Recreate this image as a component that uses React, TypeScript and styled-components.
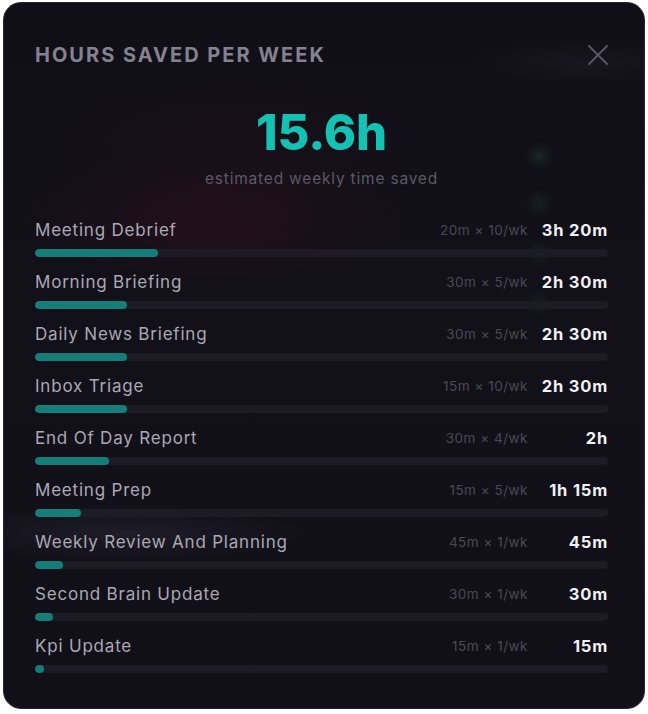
import React from "react";
import styled, { createGlobalStyle } from "styled-components";

const Global = createGlobalStyle`
  html, body { margin: 0; padding: 0; background: #ffffff; }
  body { font-family: "Inter", "Noto Sans", sans-serif; }
`;

const Page = styled.div`
  width: 648px;
  height: 714px;
  padding: 2px 3px 5px 3px;
  box-sizing: border-box;
`;

const Panel = styled.div`
  position: relative;
  width: 642px;
  height: 707px;
  box-sizing: border-box;
  border-radius: 18px;
  border: 1px solid #262530;
  overflow: hidden;
  padding: 39px 36px 0 31px;
  display: flex;
  flex-direction: column;
  background:
    radial-gradient(ellipse 260px 90px at 210px 215px, rgba(48, 14, 30, 0.55), transparent 75%),
    radial-gradient(ellipse 260px 90px at 230px 140px, rgba(34, 16, 24, 0.45), transparent 75%),
    radial-gradient(ellipse 260px 40px at 120px 530px, rgba(60, 60, 75, 0.3), transparent 70%),
    radial-gradient(circle 14px at 535px 153px, rgba(40, 90, 60, 0.3), transparent 100%),
    radial-gradient(circle 14px at 535px 200px, rgba(40, 90, 60, 0.22), transparent 100%),
    radial-gradient(circle 14px at 535px 250px, rgba(40, 90, 60, 0.2), transparent 100%),
    radial-gradient(circle 14px at 535px 300px, rgba(40, 90, 60, 0.2), transparent 100%),
    radial-gradient(ellipse 140px 30px at 580px 60px, rgba(40, 40, 55, 0.3), transparent 80%),
    linear-gradient(180deg, #100f17 0%, #121019 40%, #111019 100%);
`;

const Header = styled.div`
  display: flex;
  justify-content: space-between;
  align-items: center;
  height: 26px;
`;

const Title = styled.h2`
  margin: 0;
  font-size: 20px;
  font-weight: 700;
  letter-spacing: 2px;
  color: #84828e;
  line-height: 26px;
`;

const CloseButton = styled.button`
  width: 24px;
  height: 24px;
  margin-right: -2px;
  padding: 0;
  border: none;
  background: transparent;
  display: flex;
  align-items: center;
  justify-content: center;
  color: #5a5866;
  cursor: pointer;
`;

const Hero = styled.div`
  display: flex;
  flex-direction: column;
  align-items: center;
  margin-top: 36px;
`;

const BigNumber = styled.div`
  font-size: 49px;
  font-weight: 800;
  letter-spacing: -0.2px;
  color: #14c2b3;
  line-height: 58px;
`;

const Subtitle = styled.div`
  margin-top: 7px;
  font-size: 15.5px;
  color: #5b5966;
  line-height: 20px;
  letter-spacing: 0.8px;
`;

const List = styled.div`
  display: flex;
  flex-direction: column;
  gap: 14px;
  margin-top: 30px;
`;

const Row = styled.div`
  display: flex;
  flex-direction: column;
  gap: 8px;
`;

const Line = styled.div`
  display: flex;
  align-items: center;
  height: 22px;
`;

const Name = styled.div`
  flex: 1;
  font-size: 17px;
  color: #aaa8b3;
  line-height: 22px;
  letter-spacing: 0.8px;
`;

const Detail = styled.div`
  font-size: 13.5px;
  color: #4b4955;
  letter-spacing: 0.5px;
`;

const Value = styled.div`
  width: 68px;
  margin-left: 12px;
  text-align: right;
  font-size: 16.5px;
  font-weight: 700;
  color: #f2f1f5;
  letter-spacing: 0.8px;
`;

const Track = styled.div`
  height: 8px;
  border-radius: 4px;
  background: #1d1c26;
  overflow: hidden;
`;

const Fill = styled.div`
  height: 100%;
  border-radius: 4px;
  background: #167e79;
`;

type Item = { name: string; mins: number; per: number; count: number };

const items: Item[] = [
  { name: "Meeting Debrief", mins: 200, per: 20, count: 10 },
  { name: "Morning Briefing", mins: 150, per: 30, count: 5 },
  { name: "Daily News Briefing", mins: 150, per: 30, count: 5 },
  { name: "Inbox Triage", mins: 150, per: 15, count: 10 },
  { name: "End Of Day Report", mins: 120, per: 30, count: 4 },
  { name: "Meeting Prep", mins: 75, per: 15, count: 5 },
  { name: "Weekly Review And Planning", mins: 45, per: 45, count: 1 },
  { name: "Second Brain Update", mins: 30, per: 30, count: 1 },
  { name: "Kpi Update", mins: 15, per: 15, count: 1 },
];

const total = items.reduce((s, i) => s + i.mins, 0);

function fmt(m: number) {
  const h = Math.floor(m / 60);
  const r = m % 60;
  if (h && r) return `${h}h ${r}m`;
  if (h) return `${h}h`;
  return `${r}m`;
}

export default function App() {
  return (
    <Page>
      <Global />
      <Panel>
        <Header>
          <Title>HOURS SAVED PER WEEK</Title>
          <CloseButton aria-label="Close">
            <svg width="20" height="20" viewBox="0 0 20 20" fill="none">
              <path d="M1 1L19 19M19 1L1 19" stroke="currentColor" strokeWidth="1.8" strokeLinecap="round" />
            </svg>
          </CloseButton>
        </Header>
        <Hero>
          <BigNumber>{(total / 60).toFixed(1)}h</BigNumber>
          <Subtitle>estimated weekly time saved</Subtitle>
        </Hero>
        <List>
          {items.map((it) => (
            <Row key={it.name}>
              <Line>
                <Name>{it.name}</Name>
                <Detail>
                  {it.per}m × {it.count}/wk
                </Detail>
                <Value>{fmt(it.mins)}</Value>
              </Line>
              <Track>
                <Fill style={{ width: `${(it.mins / total) * 100}%` }} />
              </Track>
            </Row>
          ))}
        </List>
      </Panel>
    </Page>
  );
}
